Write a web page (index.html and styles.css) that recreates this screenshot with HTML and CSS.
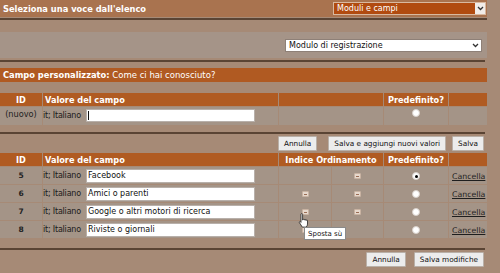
FILE: index.html
```html
<!DOCTYPE html>
<html lang="it">
<head>
<meta charset="utf-8">
<title>Campi personalizzati</title>
<link rel="stylesheet" href="styles.css">
</head>
<body>
<div class="page">
  <div class="topbar">
    <span class="title">Seleziona una voce dall'elenco</span>
    <div class="select select-orange"><span>Moduli e campi</span><span class="arrow"><svg width="7" height="5" viewBox="0 0 7 5"><path d="M1 1l2.5 2.5L6 1" fill="none" stroke="#333" stroke-width="1.3"/></svg></span></div>
  </div>
  <div class="rule"></div>
  <div class="panel">
    <div class="select select-white"><span>Modulo di registrazione</span><span class="arrow"><svg width="7" height="5" viewBox="0 0 7 5"><path d="M1 1l2.5 2.5L6 1" fill="none" stroke="#333" stroke-width="1.3"/></svg></span></div>
  </div>
  <div class="rule rule-b"></div>
  <div class="bar"><b>Campo personalizzato:</b> Come ci hai conosciuto?</div>

  <table class="grid grid-new">
    <colgroup><col class="c-id"><col class="c-val"><col class="c-ord"><col class="c-def"><col class="c-del"></colgroup>
    <thead><tr><th>ID</th><th class="left">Valore del campo</th><th></th><th>Predefinito?</th><th></th></tr></thead>
    <tbody>
      <tr><td class="id">(nuovo)</td><td><div class="val"><span class="lang">it; Italiano</span><span class="input"><span class="caret"></span></span></div></td><td></td><td class="center"><span class="radio"></span></td><td></td></tr>
    </tbody>
  </table>
  <div class="rule rule-c"></div>
  <div class="actions actions-top">
    <button class="btn">Annulla</button>
    <button class="btn btn-wide">Salva e aggiungi nuovi valori</button>
    <button class="btn">Salva</button>
  </div>

  <table class="grid grid-list">
    <colgroup><col class="c-id"><col class="c-val"><col class="c-up"><col class="c-down"><col class="c-def"><col class="c-del"></colgroup>
    <thead><tr><th>ID</th><th class="left">Valore del campo</th><th colspan="2">Indice Ordinamento</th><th>Predefinito?</th><th></th></tr></thead>
    <tbody>
      <tr><td class="id">5</td><td><div class="val"><span class="lang">it; Italiano</span><span class="input">Facebook</span></div></td><td></td><td class="center"><span class="sort"></span></td><td class="center"><span class="radio on"></span></td><td><a class="del" href="#">Cancella</a></td></tr>
      <tr><td class="id">6</td><td><div class="val"><span class="lang">it; Italiano</span><span class="input">Amici o parenti</span></div></td><td class="center"><span class="sort"></span></td><td class="center"><span class="sort"></span></td><td class="center"><span class="radio"></span></td><td><a class="del" href="#">Cancella</a></td></tr>
      <tr><td class="id">7</td><td><div class="val"><span class="lang">it; Italiano</span><span class="input">Google o altri motori di ricerca</span></div></td><td class="center"><span class="sort hover"></span></td><td class="center"><span class="sort"></span></td><td class="center"><span class="radio"></span></td><td><a class="del" href="#">Cancella</a></td></tr>
      <tr><td class="id">8</td><td><div class="val"><span class="lang">it; Italiano</span><span class="input">Riviste o giornali</span></div></td><td class="center"><span class="sort"></span></td><td></td><td class="center"><span class="radio"></span></td><td><a class="del" href="#">Cancella</a></td></tr>
    </tbody>
  </table>
  <div class="rule rule-d"></div>
  <div class="actions actions-bottom">
    <button class="btn">Annulla</button>
    <button class="btn">Salva modifiche</button>
  </div>

  <svg class="cursor" width="12" height="15" viewBox="0 0 12 15"><path d="M3 1.2c0-.7 1.6-.7 1.6 0V7l.4-.2c0-.7 1.5-.7 1.5 0v.3c0-.7 1.5-.7 1.5 0v.4c0-.7 1.5-.7 1.5 0v3.6c0 1.2-.6 2.2-1.3 3H4.3L1.4 9.6c-.4-.6.4-1.4 1-.9L3 9.4z" fill="#fff" stroke="#222" stroke-width=".8" stroke-linejoin="round"/></svg>
  <div class="tooltip">Sposta sù</div>
</div>
</body>
</html>
```
FILE: styles.css
```css
html, body {
  margin: 0;
  padding: 0;
  background: #a68a76;
  font-family: "DejaVu Sans", Verdana, sans-serif;
  font-size: 8.3px;
  color: #1e1e1e;
}
.page {
  position: relative;
  width: 487px;
  height: 273px;
}
.topbar {
  height: 17px;
  background: #a9734f;
  display: flex;
  align-items: center;
  justify-content: space-between;
  padding: 0 1px 0 3px;
}
.title {
  color: #fff;
  font-weight: bold;
  font-size: 8.3px;
}
.select {
  display: flex;
  align-items: center;
  justify-content: space-between;
  box-sizing: border-box;
  height: 13px;
  padding-left: 3px;
  font-size: 8px;
}
.select-orange {
  width: 153px;
  background: #b14b10;
  color: #fff;
  border: 1px solid #d9b9a0;
}
.select-orange .arrow {
  width: 10px;
  height: 11px;
  background: #f1ece8;
  display: flex;
  align-items: center;
  justify-content: center;
}
.select-white {
  width: 197px;
  background: #fff;
  color: #111;
  border: 1px solid #8e8077;
  padding-right: 2px;
}
.select-white .arrow {
  display: flex;
  align-items: center;
}
.rule {
  height: 2px;
  background: #5a4434;
  margin-top: 1px;
}
.panel {
  margin-top: 12px;
  height: 26px;
  background: #a59488;
  display: flex;
  align-items: center;
  justify-content: flex-end;
  padding-right: 5px;
}
.rule-b { margin-top: 2px; width: 485px; }
.bar {
  margin-top: 6px;
  height: 14px;
  line-height: 14px;
  background: #b05a22;
  color: #fff;
  padding-left: 3px;
  font-size: 8.5px;
  white-space: nowrap;
}
.bar b { font-size: 8.3px; }
.grid {
  table-layout: fixed;
  border-collapse: separate;
  border-spacing: 1px;
  margin-left: -1px;
  width: 489px;
}
.grid-new { margin-top: 10px; }
.grid-list { margin-top: 1px; }
.c-id { width: 42px; }
.c-val { width: 235px; }
.c-ord { width: 104px; }
.c-up { width: 52px; }
.c-down { width: 51px; }
.c-def { width: 64px; }
.c-del { width: 38px; }
.grid th {
  background: #b05b22;
  color: #fff;
  font-weight: bold;
  font-size: 8.2px;
  height: 13px;
  padding: 0;
  text-align: center;
  white-space: nowrap;
}
.grid th.left { text-align: left; padding-left: 2px; }
.grid td {
  background: #a49487;
  padding: 0;
  height: 17px;
}
.grid-new td { height: 16px; vertical-align: top; }
.grid td.id { text-align: center; color: #222; }
.grid-list td.id { font-weight: bold; font-size: 7.5px; }
.grid-new td.id { padding-top: 2px; font-size: 8.2px; }
.center { text-align: center; }
.val {
  display: flex;
  align-items: center;
  padding-left: 0;
}
.grid-new .val { padding-top: 2px; }
.lang { width: 43px; font-size: 8px; white-space: nowrap; color: #1a1a1a; letter-spacing: -0.2px; overflow: hidden; }
.input {
  display: flex;
  align-items: center;
  box-sizing: border-box;
  width: 169px;
  height: 14px;
  background: #fff;
  border: 1px solid #b8b0aa;
  padding-left: 1px;
  font-size: 8px;
  color: #111;
  white-space: nowrap;
}
.grid-new .input { height: 13px; }
.caret {
  width: 1px;
  height: 9px;
  background: #111;
}
.radio {
  display: inline-block;
  vertical-align: middle;
  width: 8px;
  height: 8px;
  border-radius: 50%;
  background: #fff;
  border: 1px solid #d8d0ca;
  box-sizing: border-box;
  position: relative;
}
.radio.on::after {
  content: "";
  position: absolute;
  left: 1.5px;
  top: 1.5px;
  width: 3px;
  height: 3px;
  border-radius: 50%;
  background: #000;
}
.sort {
  display: inline-block;
  vertical-align: middle;
  width: 7px;
  height: 6px;
  background: #e6d8cc;
  border: 1px solid #c9b3a2;
  box-sizing: border-box;
  position: relative;
  border-radius: 1px;
}
.sort::after {
  content: "";
  position: absolute;
  left: 1px;
  top: 1.5px;
  width: 3px;
  height: 1px;
  background: #9a6d55;
}
.del {
  color: #1e1e1e;
  text-decoration: underline;
  font-size: 7.8px;
  padding-left: 3px;
  white-space: nowrap;
}
.rule-c { margin-top: 6px; width: 485px; }
.rule-d { margin-top: 9px; width: 485px; }
.actions {
  display: flex;
  justify-content: flex-end;
  padding-right: 3px;
  margin-top: 2px;
}
.btn {
  font-family: "DejaVu Sans", Verdana, sans-serif;
  font-size: 7.3px;
  height: 15px;
  padding: 0 5px;
  margin-left: 8px;
  background: #ececec;
  border: 1px solid #b9b0a8;
  border-radius: 1px;
  color: #111;
}
.actions-top .btn:first-child { margin-right: 3px; }
.btn-wide { margin-right: -2px; }
.cursor {
  position: absolute;
  left: 298px;
  top: 213px;
}
.tooltip {
  position: absolute;
  left: 304px;
  top: 227px;
  background: #fff;
  border: 1px solid #8a8a8a;
  font-size: 7px;
  padding: 1px 3px;
  height: 13px;
  box-sizing: border-box;
  line-height: 10px;
  color: #111;
}
```
